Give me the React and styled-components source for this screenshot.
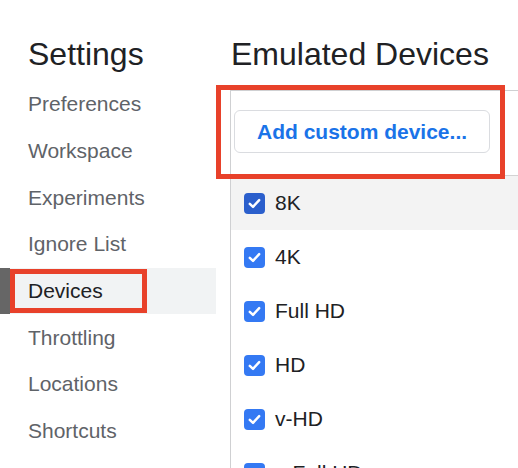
import React from "react";
import styled, { createGlobalStyle } from "styled-components";

const Global = createGlobalStyle`
  html, body { margin: 0; padding: 0; background: #fff; }
  body { font-family: "Liberation Sans", Arial, sans-serif; overflow: hidden; }
`;

const Page = styled.div`
  position: relative;
  width: 518px;
  height: 468px;
  display: flex;
  overflow: hidden;
  background: #fff;
`;

const Sidebar = styled.nav`
  width: 216px;
  flex: none;
  display: flex;
  flex-direction: column;
`;

const Title = styled.h1`
  margin: 34px 0 0;
  padding-left: ${(p) => p.$indent}px;
  font-size: 32px;
  line-height: 40px;
  font-weight: 400;
  color: #202124;
  white-space: nowrap;
`;

const NavList = styled.div`
  margin-top: 7px;
  display: flex;
  flex-direction: column;
`;

const NavItem = styled.div`
  height: 46.67px;
  display: flex;
  align-items: center;
  box-sizing: border-box;
  padding-left: ${(p) => (p.$active ? 18 : 28)}px;
  border-left: ${(p) => (p.$active ? "10px solid #666" : "0")};
  background: ${(p) => (p.$active ? "#f1f3f4" : "transparent")};
  color: ${(p) => (p.$active ? "#202124" : "#5f6368")};
  font-size: 21px;
`;

const Main = styled.main`
  flex: 1;
  margin-left: 14px;
  display: flex;
  flex-direction: column;
  min-width: 0;
`;

const Panel = styled.section`
  margin-top: 16px;
  border-top: 1px solid #cfd0d2;
  border-left: 1px solid #cfd0d2;
  flex: 1;
  display: flex;
  flex-direction: column;
`;

const Toolbar = styled.div`
  height: 84px;
  box-sizing: content-box;
  border-bottom: 1px solid #d3d3d3;
  padding-top: 0;
  display: flex;
  align-items: flex-start;
`;

const AddButton = styled.button`
  margin: 19px 0 0 3px;
  height: 43px;
  padding: 0 22px;
  border: 1px solid #dadce0;
  border-radius: 6px;
  background: #fff;
  color: #1a73e8;
  font-family: "Liberation Sans", Arial, sans-serif;
  font-size: 21px;
  font-weight: 700;
  white-space: nowrap;
  cursor: pointer;
`;

const DeviceRow = styled.label`
  height: 54px;
  flex: none;
  display: flex;
  align-items: center;
  gap: 10px;
  padding-left: 13px;
  background: ${(p) => (p.$hover ? "#f3f3f3" : "#fff")};
  color: #202124;
  font-size: 21px;
`;

const Box = styled.span`
  width: 21px;
  height: 21px;
  border-radius: 4px;
  background: ${(p) => (p.$hover ? "#2b5fcc" : "#3479f3")};
  display: flex;
  align-items: center;
  justify-content: center;
  flex: none;
`;

const Highlight = styled.div`
  position: absolute;
  box-sizing: border-box;
  border: 5px solid #e8412a;
  pointer-events: none;
`;

const Check = ({ hover }) => (
  <Box $hover={hover}>
    <svg width="15" height="15" viewBox="0 0 16 16">
      <path
        d="M3 8.4 L6.4 11.6 L13 4.4"
        fill="none"
        stroke="#fff"
        strokeWidth="2.6"
        strokeLinecap="round"
        strokeLinejoin="round"
      />
    </svg>
  </Box>
);

const nav = [
  "Preferences",
  "Workspace",
  "Experiments",
  "Ignore List",
  "Devices",
  "Throttling",
  "Locations",
  "Shortcuts",
];

const devices = ["8K", "4K", "Full HD", "HD", "v-HD", "v-Full HD"];

export default function App() {
  return (
    <>
      <Global />
      <Page>
        <Sidebar>
          <Title $indent={28}>Settings</Title>
          <NavList>
            {nav.map((n) => (
              <NavItem key={n} $active={n === "Devices"}>
                {n}
              </NavItem>
            ))}
          </NavList>
        </Sidebar>
        <Main>
          <Title $indent={1}>Emulated Devices</Title>
          <Panel>
            <Toolbar>
              <AddButton>Add custom device...</AddButton>
            </Toolbar>
            {devices.map((d, i) => (
              <DeviceRow key={d} $hover={i === 0}>
                <Check hover={i === 0} />
                {d}
              </DeviceRow>
            ))}
          </Panel>
        </Main>
        <Highlight style={{ left: 216, top: 85, width: 289, height: 94 }} />
        <Highlight style={{ left: 10, top: 269, width: 137, height: 44 }} />
      </Page>
    </>
  );
}
